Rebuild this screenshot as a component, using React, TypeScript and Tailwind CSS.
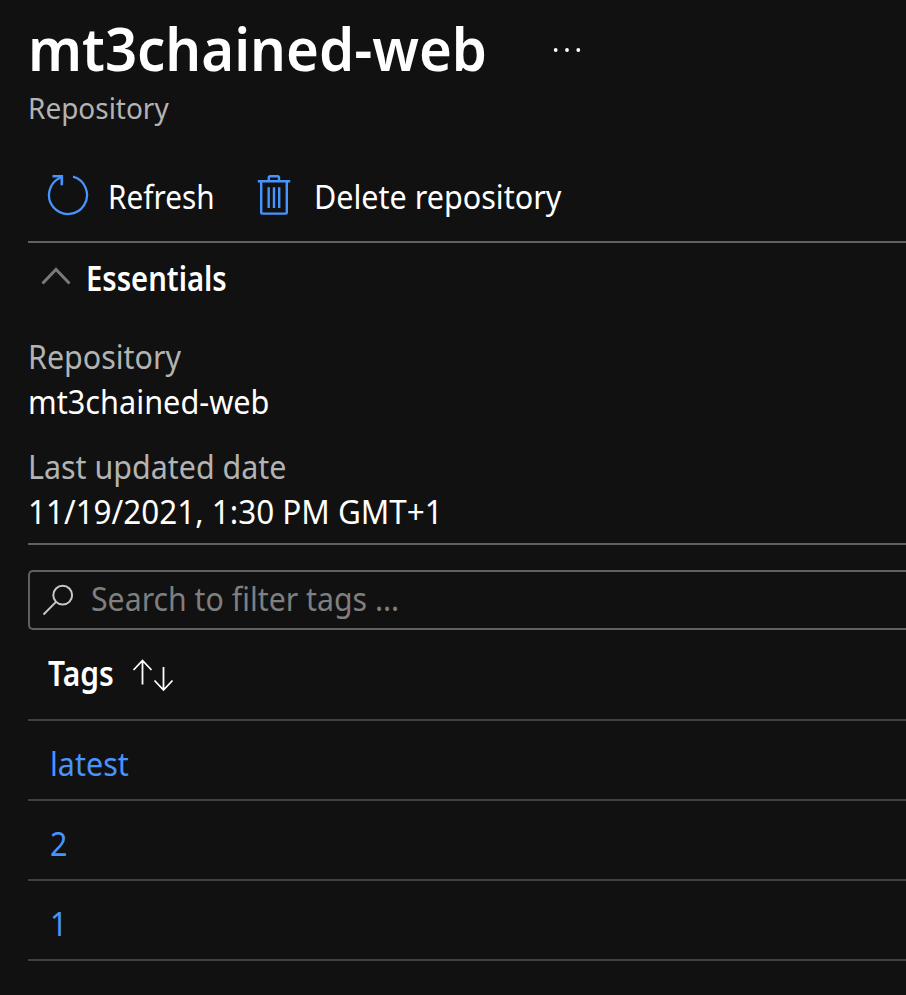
import React from "react";

const tags = ["latest", "2", "1"];

function RefreshIcon() {
  return (
    <svg width="42" height="42" viewBox="0 0 42 42" fill="none" stroke="#4894fe" strokeWidth="2.3">
      <path d="M26 1.700A19 19 0 1 1 13.200 2.700L15 1.600" />
      <path d="M5.500 1.300H14.800V10.200" strokeWidth="2.6" />
    </svg>
  );
}

function TrashIcon() {
  return (
    <svg width="34" height="42" viewBox="0 0 34 42" fill="none" stroke="#4894fe" strokeWidth="2.400">
      <path d="M0.800 6.200H33.200" />
      <path d="M11.800 6V2.600Q11.800 1.200 13.200 1.200H20.600Q22 1.200 22 2.600V6" />
      <path d="M4.200 6.500V37.300Q4.200 38.600 5.500 38.600H28.500Q29.800 38.600 29.800 37.300V6.500" />
      <path d="M11.700 12.300V33M17 12.300V33M22.200 12.300V33" />
    </svg>
  );
}

function Field({ label, value, valueClass }: { label: string; value: string; valueClass: string }) {
  return (
    <div className="whitespace-nowrap text-[33.5px] leading-[44px]">
      <div className="origin-left scale-x-[0.908] text-[#b3b3b3]">{label}</div>
      <div className={`mt-px origin-left ${valueClass}`}>{value}</div>
    </div>
  );
}

export default function App() {
  return (
    <main className="h-[995px] w-full overflow-hidden bg-[#111111] pl-7 pt-[18px] font-['Noto_Sans',sans-serif] text-white">
      <header>
        <div className="flex h-[60px] items-start">
          <h1 className="w-[525px] origin-left scale-x-[0.954] whitespace-nowrap text-[59px] font-semibold leading-[60px]">mt3chained-web</h1>
          <svg className="mt-[29px]" width="30" height="6" viewBox="0 0 30 6" fill="white">
            <circle cx="2.700" cy="3" r="1.900" />
            <circle cx="14" cy="3" r="1.900" />
            <circle cx="25.300" cy="3" r="1.900" />
          </svg>
        </div>
        <p className="mt-[10px] origin-left scale-x-[0.964] text-[29px] leading-[40px] text-[#b3b3b3]">Repository</p>
      </header>

      <div className="mt-[23px] flex h-[92px] items-center whitespace-nowrap border-b-2 border-[#606060] pl-[19px] text-[33.5px] leading-[44px]">
        <button className="flex w-[210px] items-center gap-[19px]">
          <RefreshIcon />
          <span className="origin-left scale-x-[0.888]">Refresh</span>
        </button>
        <button className="flex items-center gap-[23px]">
          <TrashIcon />
          <span className="origin-left scale-x-[0.911]">Delete repository</span>
        </button>
      </div>

      <section className="h-[302px] border-b-2 border-[#606060] pt-[13px]">
        <div className="flex h-[44px] items-start pl-[13px]">
          <svg className="mt-[10px]" width="30" height="20" viewBox="0 0 30 20" fill="none" stroke="#7a7a7a" strokeWidth="3">
            <path d="M1.500 17.500L15 3.500L28.500 17.500" />
          </svg>
          <h2 className="ml-[15px] origin-left scale-x-[0.872] text-[33.5px] font-semibold leading-[44px]">Essentials</h2>
        </div>
        <div className="mt-[34px] flex flex-col gap-[21px]">
          <Field label="Repository" value="mt3chained-web" valueClass="scale-x-[0.916]" />
          <Field label="Last updated date" value="11/19/2021, 1:30 PM GMT+1" valueClass="scale-x-[0.938]" />
        </div>
      </section>

      <div className="mt-[25px] flex h-[60px] items-center rounded-l-[5px] border-2 border-r-0 border-[#606060] pl-[12px]">
        <svg width="34" height="34" viewBox="0 0 34 34" fill="none" stroke="#c8c8c8" strokeWidth="2">
          <circle cx="20.700" cy="12.200" r="9.400" />
          <path d="M14 18.900L1.500 31.500" />
        </svg>
        <span className="-mt-1 ml-[15px] origin-left scale-x-[0.903] whitespace-nowrap text-[33.5px] leading-[44px] text-[#7f7f7f]">Search to filter tags ...</span>
      </div>

      <div className="flex h-[91px] items-center border-b-2 border-[#3f3f3f] pl-5">
        <h3 className="-mt-[3px] w-[84px] origin-left scale-x-[0.895] text-[33.5px] font-semibold leading-[44px]">Tags</h3>
        <svg width="42" height="34" viewBox="0 0 42 34" fill="none" stroke="white" strokeWidth="1.800">
          <path d="M10.500 26.500V2.500M1.500 12L10.500 2.500L19.500 12" />
          <path d="M31.500 9V32M22.500 22.500L31.500 32L40.500 22.500" />
        </svg>
      </div>
      <ul>
        {tags.map((tag) => (
          <li key={tag} className="flex h-20 items-center border-b-2 border-[#3f3f3f] pl-[22px] pt-[6px] text-[33.5px] leading-[44px] text-[#4894fe]">
            <span className="origin-left scale-x-[0.91]">{tag}</span>
          </li>
        ))}
      </ul>
    </main>
  );
}
